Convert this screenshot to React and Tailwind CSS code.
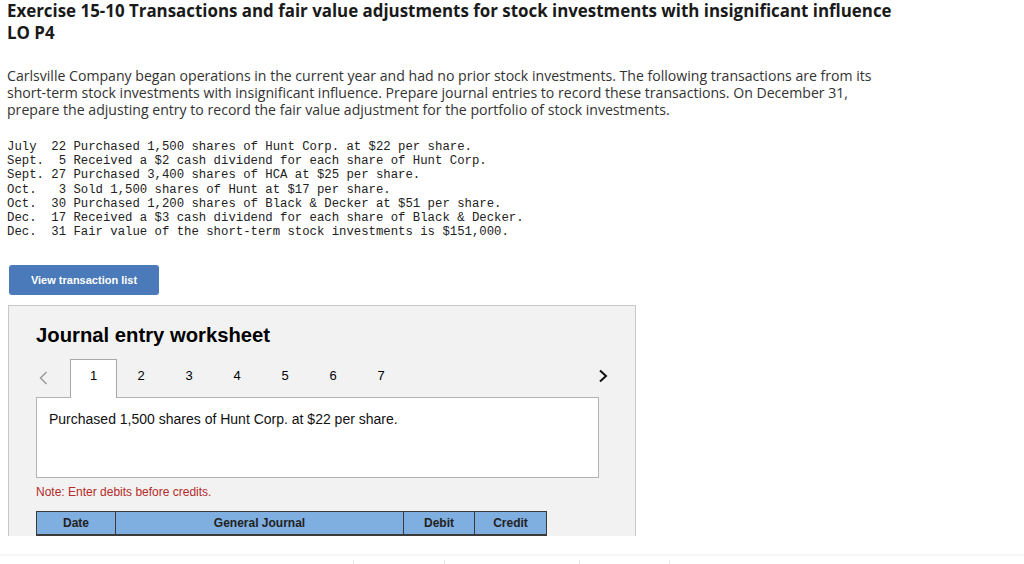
import React from "react";

const txns = [
  "July  22 Purchased 1,500 shares of Hunt Corp. at $22 per share.",
  "Sept.  5 Received a $2 cash dividend for each share of Hunt Corp.",
  "Sept. 27 Purchased 3,400 shares of HCA at $25 per share.",
  "Oct.   3 Sold 1,500 shares of Hunt at $17 per share.",
  "Oct.  30 Purchased 1,200 shares of Black & Decker at $51 per share.",
  "Dec.  17 Received a $3 cash dividend for each share of Black & Decker.",
  "Dec.  31 Fair value of the short-term stock investments is $151,000.",
];

const arial = { fontFamily: '"Liberation Sans", Arial, sans-serif' };

export default function App() {
  return (
    <div className="relative w-[1024px] h-[564px] overflow-hidden bg-white text-[#222]">
      <div className="px-[7px] font-['Open_Sans',sans-serif]">
        <h1 className="text-[16.9px] leading-[22px] font-bold text-[#1a1a1a] whitespace-nowrap">
          Exercise 15-10 Transactions and fair value adjustments for stock investments with insignificant influence
          <br />
          LO P4
        </h1>
        <p className="mt-[23px] text-[14.1px] leading-[17px] text-[#333] whitespace-nowrap">
          Carlsville Company began operations in the current year and had no prior stock investments. The following transactions are from its
          <br />
          short-term stock investments with insignificant influence. Prepare journal entries to record these transactions. On December 31,
          <br />
          prepare the adjusting entry to record the fair value adjustment for the portfolio of stock investments.
        </p>
      </div>
      <pre className="mt-[22px] pl-[7px] font-['Liberation_Mono',monospace] text-[12.3px] leading-[14.2px] text-[#222]">
        {txns.join("\n")}
      </pre>
      <div className="mt-[26px] ml-[9px]">
        <button
          className="w-[150px] h-[30px] rounded-[3px] bg-[#4a7ab9] text-white text-[11px] font-bold"
          style={arial}
        >
          View transaction list
        </button>
      </div>
      <div
        className="mt-[10px] ml-[8px] w-[628px] h-[231px] border border-b-0 border-[#c8c8c8] bg-[#f2f2f2] overflow-hidden pl-[27px] pt-[17px]"
        style={arial}
      >
        <h2 className="text-[20.25px] leading-[24px] font-bold text-black">Journal entry worksheet</h2>
        <div className="mt-[12px] flex items-stretch w-[572px] h-[38px]">
          <div className="w-[34px] flex items-center pl-[3px]">
            <svg width="9" height="14" viewBox="0 0 9 14">
              <polyline points="7.5,1 1.5,7 7.5,13" fill="none" stroke="#9a9a9a" strokeWidth="1.5" />
            </svg>
          </div>
          <div className="relative z-10 w-[47px] -mb-px bg-white border border-b-0 border-[#a8a8a8] flex items-start justify-center pt-[6px] text-[13px] text-black">
            1
          </div>
          {[2, 3, 4, 5, 6, 7].map((n) => (
            <div key={n} className="w-[48px] flex items-start justify-center pt-[7px] text-[13px] text-black">
              {n}
            </div>
          ))}
          <div className="ml-auto flex items-center pb-[4px]">
            <svg width="10" height="14" viewBox="0 0 10 14">
              <polyline points="2,1.5 8,7 2,12.5" fill="none" stroke="#111" strokeWidth="2" />
            </svg>
          </div>
        </div>
        <div className="w-[563px] h-[81px] border border-[#b3b3b3] bg-white px-[12px] pt-[13px] text-[14px] leading-[16px] text-[#111]">
          Purchased 1,500 shares of Hunt Corp. at $22 per share.
        </div>
        <div className="mt-[7px] text-[12px] leading-[14px] text-[#b52a2a]">Note: Enter debits before credits.</div>
        <div className="mt-[12px] flex w-[511px] h-[25px] bg-[#7faee0] border border-b-2 border-[#3a3a3a] text-[12px] font-bold text-[#222]">
          <div className="w-[79px] flex items-center justify-center border-r border-[#3a3a3a]">Date</div>
          <div className="w-[288px] flex items-center justify-center border-r border-[#3a3a3a]">General Journal</div>
          <div className="w-[71px] flex items-center justify-center border-r border-[#3a3a3a]">Debit</div>
          <div className="flex-1 flex items-center justify-center">Credit</div>
        </div>
      </div>
      <div className="mt-[18px] h-[2px] bg-[#f6f6f6]" />
      <div className="mt-[4px] flex h-[6px]">
        <div className="w-[353px]" />
        <div className="w-[91px] border-l border-[#e8e8e8]" />
        <div className="w-[135px] border-l border-[#e8e8e8]" />
        <div className="w-[91px] border-l border-r border-[#e8e8e8]" />
      </div>
    </div>
  );
}
